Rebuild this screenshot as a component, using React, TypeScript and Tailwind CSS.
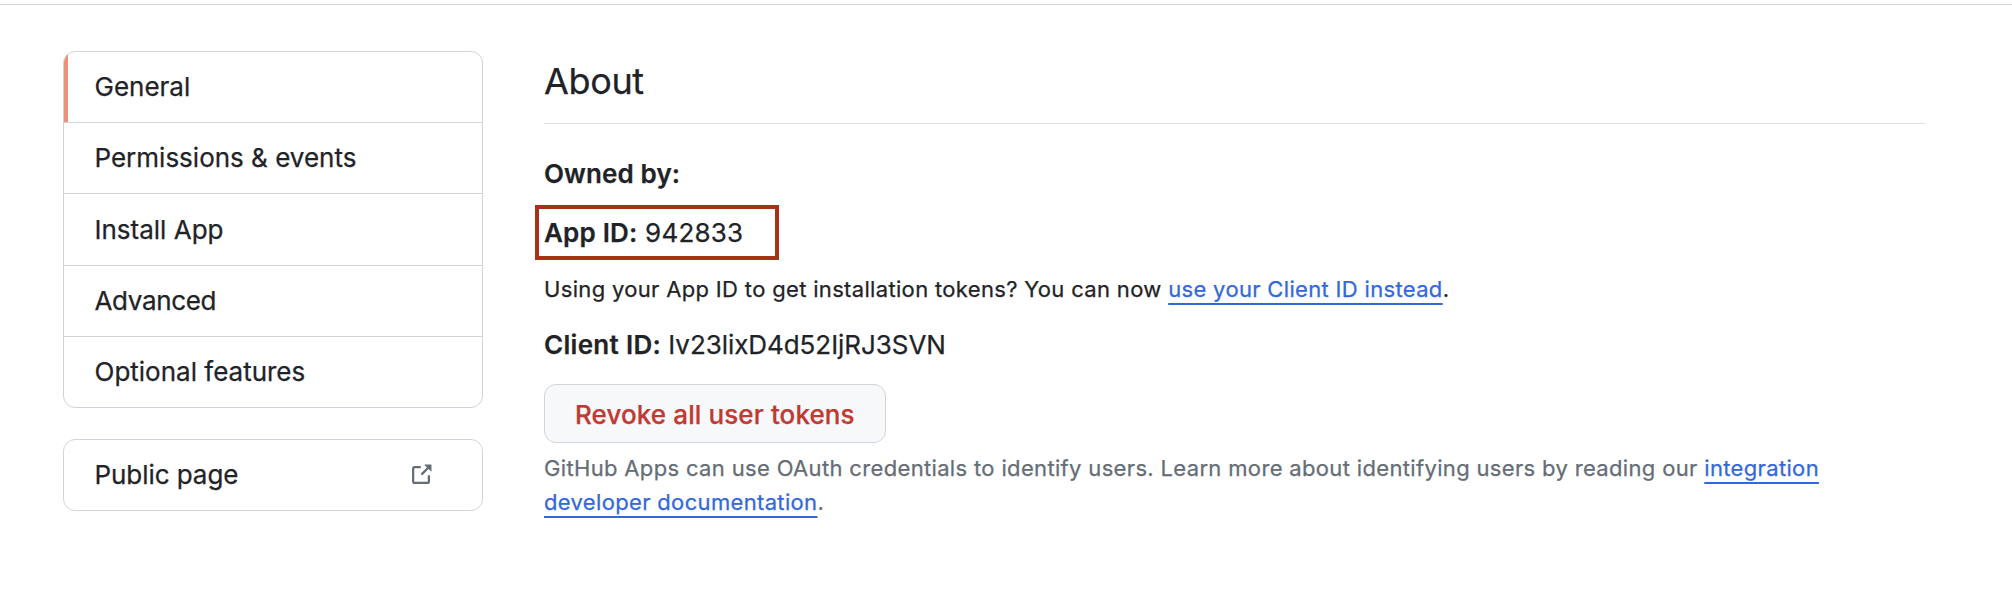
import React from "react";

const sections = [
  { label: "General", height: "h-[70px]", tracking: "tracking-normal" },
  { label: "Permissions & events", height: "h-[71px]", tracking: "tracking-normal" },
  { label: "Install App", height: "h-[72px]", tracking: "tracking-normal" },
  { label: "Advanced", height: "h-[71px]", tracking: "tracking-[-0.35px]" },
  { label: "Optional features", height: "h-[71px]", tracking: "tracking-normal" },
];

function ExternalIcon() {
  return (
    <svg viewBox="0 0 16 16" className="-mt-px size-6 fill-[#656d76]" aria-hidden="true">
      <path d="M10.604 1h4.146a.25.25 0 01.25.25v4.146a.25.25 0 01-.427.177L13.03 4.03 9.28 7.78a.75.75 0 01-1.06-1.06l3.75-3.75-1.543-1.543A.25.25 0 0110.604 1zM3.75 2A1.75 1.75 0 002 3.75v8.5c0 .966.784 1.75 1.75 1.75h8.5A1.75 1.75 0 0014 12.25v-3.5a.75.75 0 00-1.5 0v3.5a.25.25 0 01-.25.25h-8.5a.25.25 0 01-.25-.25v-8.5a.25.25 0 01.25-.25h3.5a.75.75 0 000-1.5h-3.5z" />
    </svg>
  );
}

function Link({ children }: { children: React.ReactNode }) {
  return (
    <a
      href="#"
      className="text-[#3368dc] underline decoration-2 underline-offset-[6px] [text-decoration-skip-ink:none]"
    >
      {children}
    </a>
  );
}

export default function App() {
  return (
    <div className="h-[598px] w-[2012px] overflow-hidden bg-white pt-1 font-['Inter',sans-serif] text-[#1f2328] [-webkit-text-stroke-width:0.25px]">
      <div className="h-px bg-[#d0d5dc]" />
      <div className="flex pl-[63px] pt-[46px]">
        <nav className="w-[420px] shrink-0 text-[26px] leading-[36px]">
          <ul className="overflow-hidden rounded-[12px] border border-[#d0d5dc]">
            {sections.map(({ label, height, tracking }, i) => (
              <li
                key={label}
                className={`relative flex items-center pl-[30.5px] ${height} ${tracking} ${i ? "border-t border-[#d0d5dc]" : ""}`}
              >
                {i === 0 && <span className="absolute inset-y-0 left-0 w-1 bg-[#ee9079]" />}
                {label}
              </li>
            ))}
          </ul>
          <a
            href="#"
            className="mt-[31px] flex h-[72px] items-center justify-between rounded-[12px] border border-[#d0d5dc] pl-[30.5px] pr-[49px] tracking-[-0.06px]"
          >
            Public page
            <ExternalIcon />
          </a>
        </nav>
        <main className="ml-[61px] w-[1381px] text-[26px] leading-[39px] tracking-[0.12px]">
          <h2 className="border-b border-[#dfe1e4] pb-3 text-[36px] leading-[60px] tracking-[-0.35px]">About</h2>
          <p className="mt-[30px] font-semibold">Owned by:</p>
          <p className="-ml-[9px] mt-3 h-[55px] w-[244px] border-4 border-[#a33216] pl-[5px] leading-[47px] tracking-[0.2px]">
            <b className="font-semibold">App ID:</b> 942833
          </p>
          <p className="mt-3 text-[22px] leading-[34px] tracking-[0.33px]">
            Using your App ID to get installation tokens? You can now <Link>use your Client ID instead</Link>.
          </p>
          <p className="mt-[19px] tracking-[-0.06px]">
            <b className="font-semibold tracking-[0.3px]">Client ID:</b> Iv23lixD4d52IjRJ3SVN
          </p>
          <button className="mt-5 flex h-[59px] w-[342px] items-center rounded-[12px] border border-[#d0d5dc] bg-[#f6f8fa] pl-[30px] pt-0.5 font-medium tracking-[0.1px] text-[#c03a33]">
            Revoke all user tokens
          </button>
          <div className="mt-2 text-[22px] leading-[34px] tracking-[0.34px] text-[#656d76]">
            <p>
              GitHub Apps can use OAuth credentials to identify users. Learn more about identifying users by reading
              our <Link>integration</Link>
            </p>
            <p>
              <Link>developer documentation</Link>.
            </p>
          </div>
        </main>
      </div>
    </div>
  );
}
